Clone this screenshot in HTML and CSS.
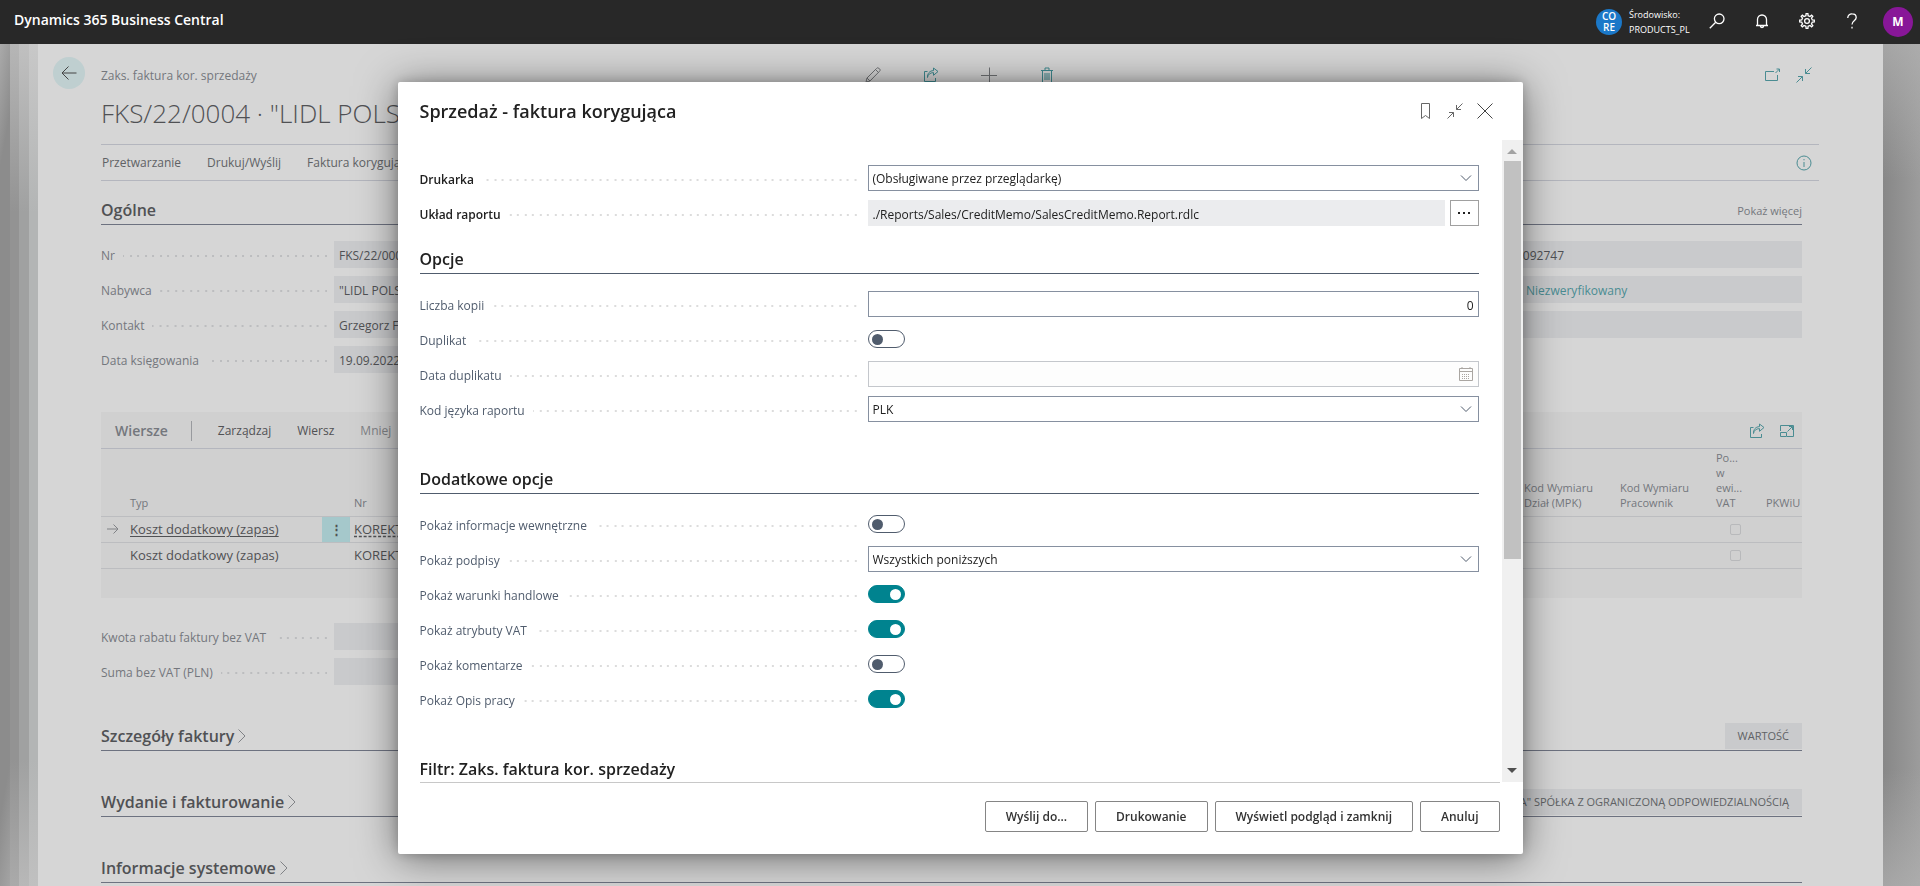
FILE: index.html
```html
<!DOCTYPE html>
<html lang="pl">
<head>
<meta charset="utf-8">
<title>Sprzedaż - faktura korygująca</title>
<link rel="stylesheet" href="styles.css">
</head>
<body>
<svg class="defs" aria-hidden="true">
  <symbol id="i-share" viewBox="0 0 16 16"><path d="M4.500 4.500H1.500v10h11v-3.500M4.500 10.500c.4-3 2.500-4.800 6-4.900V8.300L15 4.500 10.500 1v2.600C6.500 3.800 4.300 6.500 4.500 10.500z"/></symbol>
  <symbol id="i-collapse" viewBox="0 0 16 16"><path d="M15.500.5 9.500 6.500M9.500 2v4.500H14M.5 15.500l6-6M2 9.500h4.500V14"/></symbol>
  <symbol id="i-chevron" viewBox="0 0 12 12"><path d="M1 3.500l5 5 5-5"/></symbol>
  <symbol id="i-next" viewBox="0 0 10 16"><path d="M1.500 1.500 8 8l-6.500 6.500"/></symbol>
</svg>

<header class="topbar">
  <span class="brand">Dynamics 365 Business Central</span>
  <span class="env-badge">CO<br>RE</span>
  <span class="env-name">Środowisko:<br>PRODUCTS_PL</span>
  <nav class="topbar-tools">
    <button type="button" aria-label="Szukaj"><svg class="icon" viewBox="0 0 16 16"><circle cx="10.200" cy="5.800" r="4.800"/><path d="M6.700 9.300.8 15.200"/></svg></button>
    <button type="button" aria-label="Powiadomienia"><svg class="icon" viewBox="0 0 16 16"><path d="M2 12.500h12M3.500 12.500V6.500a4.500 4.500 0 0 1 9 0v6M6.300 12.800a1.700 1.700 0 0 0 3.400 0"/></svg></button>
    <button type="button" aria-label="Ustawienia"><svg class="icon" viewBox="0 0 16 16"><path d="M6.900 2.700 7.100.7h1.800l.2 2 1.900.8 1.600-1.300 1.200 1.200-1.300 1.600.8 1.900 2 .2v1.800l-2 .2-.8 1.900 1.300 1.600-1.200 1.200-1.600-1.300-1.900.8-.2 2H7.100l-.2-2-1.900-.8-1.600 1.300-1.200-1.200L3.500 11l-.8-1.900-2-.2V7.100l2-.2.8-1.900-1.300-1.600 1.200-1.200L5 3.500z"/><circle cx="8" cy="8" r="2.400"/></svg></button>
    <button type="button" aria-label="Pomoc"><svg class="icon" viewBox="0 0 16 16"><path d="M3.800 5V4.500A4 4 0 0 1 8.200.8c2.400 0 4 1.500 4 3.700 0 3.300-4.200 3.300-4.200 7M8 13.800v1.700"/></svg></button>
  </nav>
  <button type="button" class="avatar">M</button>
</header>

<div class="stage">
  <div class="stack"><i></i><i></i><i></i><i></i></div>
  <div class="page">
    <button type="button" class="back" aria-label="Wstecz"><svg class="icon" viewBox="0 0 16 16"><path d="M15.500 8H1M7.500 1.500 1 8l6.500 6.500"/></svg></button>
    <main class="card">
      <div class="card-top">
        <span class="crumb">Zaks. faktura kor. sprzedaży</span>
        <div class="card-tools">
          <button type="button" aria-label="Edytuj"><svg class="icon" viewBox="0 0 16 16"><path d="M1 15l1-4L11.500 1.500a1.600 1.600 0 0 1 2.500 0 1.600 1.600 0 0 1 .5 2.800L5 14zM2 11l3 3M10.500 2.500l3 3"/></svg></button>
          <button type="button" class="teal" aria-label="Udostępnij"><svg class="icon"><use href="#i-share"/></svg></button>
          <button type="button" aria-label="Nowy"><svg class="icon" viewBox="0 0 16 16"><path d="M0 8.500h16M8.500.5v16"/></svg></button>
          <button type="button" class="teal" aria-label="Usuń"><svg class="icon" viewBox="0 0 16 16"><path d="M2 3.500h12M3.500 3.500v12h9v-12M6 3V1h4v2M6 6v7M8 6v7M10 6v7"/></svg></button>
        </div>
        <div class="card-view teal">
          <button type="button" aria-label="Otwórz w nowym oknie"><svg class="icon" viewBox="0 0 16 16"><path d="M10 4.500H1.500v9h12V8M11.500 6 15.500 2M12.500 2h3v3"/></svg></button>
          <button type="button" aria-label="Zwiń"><svg class="icon"><use href="#i-collapse"/></svg></button>
        </div>
      </div>
      <h1 class="card-title">FKS/22/0004 · "LIDL POLS</h1>
      <nav class="actions">
        <button type="button">Przetwarzanie</button>
        <button type="button">Drukuj/Wyślij</button>
        <button type="button">Faktura korygująca</button>
        <button type="button" class="info teal" aria-label="Informacje"><svg class="icon" viewBox="0 0 16 16"><circle cx="8" cy="8" r="7"/><path d="M8 7v5M8 4v1.300"/></svg></button>
      </nav>

      <div class="card-body">
        <section>
          <div class="fasttab"><h2>Ogólne</h2><a href="#more">Pokaż więcej</a></div>
          <div class="general">
            <dl class="facts">
              <div><dt>Nr</dt><dd>FKS/22/0004</dd></div>
              <div><dt>Nabywca</dt><dd>"LIDL POLSKA"</dd></div>
              <div><dt>Kontakt</dt><dd>Grzegorz F</dd></div>
              <div><dt>Data księgowania</dt><dd>19.09.2022</dd></div>
            </dl>
            <div class="values">
              <span>2092747</span>
              <span class="teal status">Niezweryfikowany</span>
              <span></span>
            </div>
          </div>
        </section>

        <section class="lines">
          <div class="lines-bar">
            <h2>Wiersze</h2>
            <button type="button">Zarządzaj</button>
            <button type="button">Wiersz</button>
            <button type="button" class="dim">Mniej</button>
            <div class="lines-tools teal">
              <button type="button" aria-label="Udostępnij"><svg class="icon"><use href="#i-share"/></svg></button>
              <button type="button" aria-label="Powiększ"><svg class="icon" viewBox="0 0 16 16"><path d="M1.500 8V2.500h13v11H8M1.500 9.500h6v4h-6zM8.500 8.500l5-5M10 3.500h3.500V7"/></svg></button>
            </div>
          </div>
          <table>
            <colgroup><col class="c-arrow"><col class="c-type"><col class="c-menu"><col><col class="c-dim"><col class="c-dim"><col class="c-vat"><col class="c-pkwiu"></colgroup>
            <thead>
              <tr><th></th><th>Typ</th><th></th><th>Nr</th><th>Kod Wymiaru<br>Dział (MPK)</th><th>Kod Wymiaru<br>Pracownik</th><th>Po...<br>w<br>ewi...<br>VAT</th><th>PKWiU</th></tr>
            </thead>
            <tbody>
              <tr>
                <td class="row-arrow"><svg class="icon" viewBox="0 0 12 12"><path d="M0 6h11M6.500 1.500 11 6l-4.500 4.500"/></svg></td>
                <td><a href="#type">Koszt dodatkowy (zapas)</a></td>
                <td class="row-menu"><button type="button" aria-label="Więcej opcji">⋮</button></td>
                <td><a href="#no" class="dashed">KOREKTA</a></td><td></td><td></td>
                <td class="tick"><input type="checkbox" disabled aria-label="Pomiń w ewidencji VAT, wiersz 1"></td><td></td>
              </tr>
              <tr>
                <td></td><td>Koszt dodatkowy (zapas)</td><td></td><td>KOREKTA</td><td></td><td></td>
                <td class="tick"><input type="checkbox" disabled aria-label="Pomiń w ewidencji VAT, wiersz 2"></td><td></td>
              </tr>
            </tbody>
          </table>
        </section>

        <dl class="facts totals">
          <div><dt>Kwota rabatu faktury bez VAT</dt><dd></dd></div>
          <div><dt>Suma bez VAT (PLN)</dt><dd></dd></div>
        </dl>

        <section class="folded"><h2>Szczegóły faktury</h2><svg class="icon"><use href="#i-next"/></svg><span>WARTOŚĆ</span></section>
        <section class="folded"><h2>Wydanie i fakturowanie</h2><svg class="icon"><use href="#i-next"/></svg><span>"LIDL POLSKA" SPÓŁKA Z OGRANICZONĄ ODPOWIEDZIALNOŚCIĄ</span></section>
        <section class="folded"><h2>Informacje systemowe</h2><svg class="icon"><use href="#i-next"/></svg></section>
      </div>
    </main>
  </div>
  <div class="edge"></div>
</div>

<div class="overlay">
  <form class="dialog" role="dialog" aria-labelledby="dialog-title">
    <header class="dialog-head">
      <h1 id="dialog-title">Sprzedaż - faktura korygująca</h1>
      <button type="button" aria-label="Zakładka"><svg class="icon" viewBox="0 0 16 16"><path d="M4.500.5h8v15l-4-3-4 3z"/></svg></button>
      <button type="button" aria-label="Zwiń"><svg class="icon"><use href="#i-collapse"/></svg></button>
      <button type="button" class="close" aria-label="Zamknij"><svg class="icon" viewBox="0 0 16 16"><path d="M.5.5l15 15M15.500.5l-15 15"/></svg></button>
    </header>
    <div class="dialog-main">
      <div class="dialog-body">
        <section class="rows">
          <div class="row strong"><label for="printer">Drukarka</label><div class="field"><select id="printer"><option>(Obsługiwane przez przeglądarkę)</option></select><svg class="icon"><use href="#i-chevron"/></svg></div></div>
          <div class="row strong"><label for="layout">Układ raportu</label><div class="lookup"><input id="layout" type="text" readonly value="./Reports/Sales/CreditMemo/SalesCreditMemo.Report.rdlc"><button type="button" aria-label="Wybierz układ"><svg class="icon dots" viewBox="0 0 16 16"><path d="M2 8h2M7 8h2M12 8h2"/></svg></button></div></div>
        </section>
        <section class="rows options">
          <h2>Opcje</h2>
          <div class="row"><label for="copies">Liczba kopii</label><div class="field"><input id="copies" class="number" type="text" value="0"></div></div>
          <div class="row"><label for="dup">Duplikat</label><input id="dup" class="switch" type="checkbox"></div>
          <div class="row"><label for="dupdate">Data duplikatu</label><div class="field"><input id="dupdate" type="text" disabled><svg class="icon calendar" viewBox="0 0 16 16"><path d="M1.500 2.500h13v12h-13zM1.500 5.500h13M4 1v2M12 1v2"/><path class="days" d="M4 8.500h8M4 10.500h8M4 12.500h8"/></svg></div></div>
          <div class="row"><label for="lang">Kod języka raportu</label><div class="field"><select id="lang"><option>PLK</option></select><svg class="icon"><use href="#i-chevron"/></svg></div></div>
        </section>
        <section class="rows">
          <h2>Dodatkowe opcje</h2>
          <div class="row"><label for="internal">Pokaż informacje wewnętrzne</label><input id="internal" class="switch" type="checkbox"></div>
          <div class="row"><label for="sign">Pokaż podpisy</label><div class="field"><select id="sign"><option>Wszystkich poniższych</option></select><svg class="icon"><use href="#i-chevron"/></svg></div></div>
          <div class="row"><label for="terms">Pokaż warunki handlowe</label><input id="terms" class="switch" type="checkbox" checked></div>
          <div class="row"><label for="vat">Pokaż atrybuty VAT</label><input id="vat" class="switch" type="checkbox" checked></div>
          <div class="row"><label for="comments">Pokaż komentarze</label><input id="comments" class="switch" type="checkbox"></div>
          <div class="row"><label for="work">Pokaż Opis pracy</label><input id="work" class="switch" type="checkbox" checked></div>
        </section>
        <section class="rows">
          <h2>Filtr: Zaks. faktura kor. sprzedaży</h2>
        </section>
      </div>
      <div class="scrollbar"><span class="up"></span><span class="thumb"></span><span class="down"></span></div>
    </div>
    <footer class="dialog-foot">
      <button type="button">Wyślij do...</button>
      <button type="button">Drukowanie</button>
      <button type="button">Wyświetl podgląd i zamknij</button>
      <button type="button">Anuluj</button>
    </footer>
  </form>
</div>
</body>
</html>
```

FILE: styles.css
```css
* { box-sizing: border-box; }

body {
  margin: 0;
  height: 100vh;
  display: flex;
  flex-direction: column;
  overflow: hidden;
  background: #9a9a9a;
  color: #505154;
  font: 12px/20px "Open Sans", "Noto Sans", sans-serif;
}

h1, h2, dl, dd { margin: 0; }
h2 { font-size: 16px; font-weight: 600; }
a { color: inherit; }

button, input, select { font: inherit; color: inherit; }
button { padding: 0; border: 0; background: none; white-space: nowrap; }

.defs { display: none; }
.icon {
  display: block;
  width: 16px;
  height: 16px;
  fill: none;
  stroke: currentColor;
  stroke-width: 1;
}
.teal { color: #4a8c92; }

/* Top bar */
.topbar {
  flex: none;
  display: flex;
  align-items: center;
  height: 44px;
  padding: 0 7px 0 14px;
  background: #282828;
  color: #fff;
}
.brand { flex: 1; font-size: 14px; font-weight: 600; padding-bottom: 4px; }
.env-badge {
  width: 26px;
  height: 26px;
  padding-top: 2px;
  border-radius: 50%;
  background: #1b78c8;
  font-size: 10px;
  font-weight: 600;
  line-height: 11px;
  text-align: center;
}
.env-name { width: 64px; margin-left: 7px; font-size: 9px; line-height: 15px; white-space: nowrap; }
.topbar-tools { display: flex; gap: 29px; margin: 0 23px 2px 16px; }
.topbar-tools .icon { stroke-width: 1.3; }
.avatar {
  width: 30px;
  height: 30px;
  border-radius: 50%;
  background: #881798;
  font-weight: 700;
}

/* Stacked pages behind the dialog */
.stage { flex: 1; display: flex; min-height: 0; overflow: hidden; }
.stack { display: grid; grid-template-columns: 10px 9px 10px 9px; }
.stack i:nth-child(1) { background: linear-gradient(100deg, #aaa, #8c8c8c 14%, #8c8c8c 86%, #a4a4a4); }
.stack i:nth-child(2) { background: linear-gradient(#b6b6b6, #939393 20%, #939393 85%, #aaa); }
.stack i:nth-child(3) { background: linear-gradient(#c0c0c0, #a0a1a1 20%, #a0a1a1 85%, #b8b8b8); }
.stack i:nth-child(4) { background: linear-gradient(#c8c8c8, #b3b5b5 20%, #b3b5b5 85%, #c0c0c0); }
.edge { width: 37px; background: linear-gradient(#b4b4b4aa, #b4b4b400 16%, #b4b4b400 86%, #b4b4b4aa), linear-gradient(90deg, #878787, #9c9c9c); }

.page {
  flex: 1;
  min-width: 0;
  display: flex;
  align-items: flex-start;
  gap: 16px;
  padding: 0 64px 0 15px;
  background: #d6d6d6;
}
.back {
  flex: none;
  display: grid;
  place-items: center;
  width: 32px;
  height: 32px;
  margin-top: 13px;
  border-radius: 50%;
  background: #bfcfd0;
  color: #444;
}
.card { flex: 1; min-width: 0; padding-top: 21px; }
.card-top { display: grid; grid-template-columns: 1fr auto 1fr; height: 20px; }
.card-top button { height: 20px; }
.crumb { padding-top: 1px; color: #74777d; }
.card-tools { display: flex; gap: 42px; color: #707275; }
.card-tools .teal { color: #3f8a90; }
.card-view { display: flex; justify-content: flex-end; gap: 16px; padding-right: 7px; }
.card-title {
  overflow: hidden;
  padding-bottom: 2px;
  font-size: 26px;
  font-weight: 300;
  line-height: 57px;
  white-space: nowrap;
}
.actions {
  display: flex;
  align-items: center;
  gap: 26px;
  height: 37px;
  padding: 1px 7px 0 1px;
  border: solid #b4b6be;
  border-width: 1px 0;
  color: #606265;
}
.info { margin-left: auto; }
.card-body { padding: 16px 17px 0 0; }

.fasttab { display: flex; justify-content: space-between; height: 28px; border-bottom: 1px solid #6d7280; }
.fasttab h2 { line-height: 27px; }
.fasttab a { font-size: 11px; line-height: 28px; text-decoration: none; color: #74777d; }

.general { display: grid; grid-template-columns: 1fr 313px; gap: 16px; padding-top: 16px; }
.facts { display: grid; gap: 8px; }
.facts div { display: grid; grid-template-columns: 226px 1fr; gap: 7px; height: 27px; align-items: center; }
.facts dt { color: #74777d; }
.facts dd, .values span { height: 27px; padding: 0 5px; line-height: 30px; background: #c9cacc; }
.facts dt, .row label { display: flex; align-items: center; gap: 8px; padding-top: 3px; white-space: nowrap; }
.facts dt::after, .row label::after {
  content: "";
  flex: 1;
  height: 2px;
  background: right / 15px 2px linear-gradient(90deg, transparent 5px, #bcbdbf 5px 7px, transparent 7px 13px, #bcbdbf 13px);
}
.row label::after { background-image: linear-gradient(90deg, transparent 5px, #dcdcdc 5px 7px, transparent 7px 13px, #dcdcdc 13px); }
.values { display: grid; gap: 8px; align-content: start; }
.values span { padding-left: 27px; }
.values .status { padding-left: 37px; }
.totals { width: 48%; margin-top: 25px; }

/* Document lines */
.lines { margin-top: 39px; padding-bottom: 29px; background: #d0d0d0; }
.lines-bar { display: flex; align-items: center; gap: 26px; height: 37px; padding: 2px 7px 0 14px; border-bottom: 1px solid #b4b6be; }
.lines-bar h2 { padding-right: 23px; border-right: 1px solid #989a9e; color: #74777d; font-size: 14px; }
.lines-bar .dim { color: #808286; }
.lines-tools { display: flex; gap: 14px; margin-left: auto; }
.lines table { width: 100%; table-layout: fixed; border-collapse: collapse; }
.c-arrow { width: 25px; }
.c-type { width: 196px; }
.c-menu { width: 28px; }
.c-dim { width: 96px; }
.c-vat { width: 50px; }
.c-pkwiu { width: 40px; }
.lines th, .lines td { padding: 0 0 0 4px; border-bottom: 1px solid #bcbdc0; text-align: left; white-space: nowrap; }
.lines th { height: 67px; padding-bottom: 6px; color: #74777d; font-size: 11px; font-weight: 400; line-height: 15px; vertical-align: bottom; }
.lines td { height: 26px; font-size: 13px; }
.lines a { text-underline-offset: 2px; }
.lines .dashed { text-decoration-style: dashed; }
.lines .row-arrow { padding-left: 6px; color: #808286; }
.row-arrow .icon { width: 12px; height: 12px; }
.lines .row-menu { padding: 0; background: #a5c8cb; }
.row-menu button { display: block; width: 100%; font-weight: 700; }
.lines .tick { padding-left: 18px; }
.tick input { display: block; appearance: none; width: 11px; height: 11px; margin: 0; border: 1px solid #b8b9bb; border-radius: 2px; }

.folded { display: flex; align-items: center; margin-top: 38px; height: 28px; border-bottom: 1px solid #6d7280; }
.folded .icon { width: 10px; margin-left: 3px; color: #808286; }
.folded span { margin-left: auto; padding: 0 13px; font-size: 11px; line-height: 26px; background: #c9cacc; color: #606265; }

/* Request page dialog */
.overlay { position: fixed; inset: 0; display: flex; justify-content: center; padding: 82px 32px 32px; }
.dialog {
  flex: 0 1 1125px;
  min-width: 0;
  display: flex;
  flex-direction: column;
  border-radius: 2px;
  background: #fff;
  box-shadow: 0 4px 40px rgba(0, 0, 0, .5), 0 0 12px rgba(0, 0, 0, .2);
  color: #212121;
}
.dialog-head { flex: none; display: flex; align-items: center; gap: 14px; height: 58px; padding: 0 30px 0 22px; color: #666; }
.dialog-head h1 { flex: 1; color: #212121; font-size: 18px; font-weight: 600; line-height: 24px; }
.dialog-head .close { color: #444; }
.dialog-main { flex: 1; display: flex; min-height: 0; }
.dialog-body { flex: 1; min-width: 0; overflow: hidden; padding: 25px 23px 0 22px; }
.rows { display: grid; gap: 9px; margin-bottom: 44px; }
.rows:first-child { margin-bottom: 20px; }
.rows h2 { height: 28px; margin-bottom: 8px; border-bottom: 1px solid #505c6d; line-height: 27px; }
.row { display: grid; grid-template-columns: 437px 1fr; gap: 11px; height: 26px; align-items: center; }
.row label { color: #505c6d; }
.strong label { color: #212121; font-weight: 600; }

.field { display: grid; grid-template-columns: 1fr 26px; align-items: center; }
.field > * { grid-row: 1; }
.field > input, .field > select { grid-column: 1 / 3; }
.field > .icon { grid-column: 2; justify-self: center; width: 12px; height: 12px; color: #505c6d; pointer-events: none; }
.field > .calendar { width: 16px; height: 16px; color: #aaa6a2; }
.calendar .days { stroke-dasharray: 1 1; }
.row input:not(.switch), .row select {
  appearance: none;
  width: 100%;
  min-width: 0;
  height: 26px;
  margin: 0;
  padding: 2px 4px 0;
  border: 1px solid #8690a0;
  border-radius: 0;
  background: #fff;
}
.row input:not(.switch):disabled { border-color: #c4c7cc; background: #fdfdfd; }
.row .number { text-align: right; }
.lookup { display: grid; grid-template-columns: 1fr 29px; gap: 5px; }
.row .lookup input { border-color: #ebecee; background: #ebecee; }
.lookup button { display: grid; place-items: center; border: 1px solid #a0a0a0; }
.dots { stroke-width: 2; }

.switch {
  appearance: none;
  width: 37px;
  height: 18px;
  margin: 0;
  padding: 3px;
  border: 1px solid #505c6d;
  border-radius: 9px;
  display: flex;
  align-items: center;
}
.switch::before { content: ""; width: 11px; height: 11px; border-radius: 50%; background: #505c6d; }
.switch:checked { justify-content: flex-end; border-color: #00838f; background: #00838f; }
.switch:checked::before { background: #fff; }

.scrollbar { flex: none; display: flex; flex-direction: column; align-items: center; width: 21px; background: #f0f0f0; }
.scrollbar .up, .scrollbar .down { border: solid transparent; border-width: 0 5px; }
.scrollbar .up { margin: 9px 0 7px; border-bottom: 5px solid #a3a3a3; }
.scrollbar .thumb { flex: 0 1 398px; width: 17px; background: #c1c1c1; }
.scrollbar .down { margin: auto 0 9px; border-top: 5px solid #505050; }

.dialog-foot { flex: none; display: flex; justify-content: flex-end; gap: 7px; height: 72px; margin: 0 23px 0 22px; padding-top: 18px; border-top: 1px solid #c8c8c8; }
.dialog-foot button { height: 31px; padding: 0 20px; border: 1px solid #858585; border-radius: 2px; color: #333; font-weight: 600; }
```
